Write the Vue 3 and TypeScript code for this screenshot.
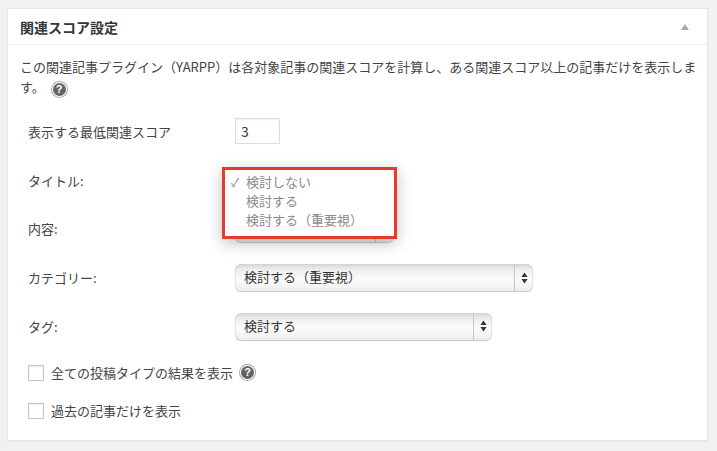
<script setup lang="ts">
interface SelectRow {
  label: string;
  value: string;
  width: number;
}

// the first two selects sit under the open menu, so their values can't be seen
const selectRows: SelectRow[] = [
  { label: 'タイトル:', value: '', width: 159 },
  { label: '内容:', value: '', width: 159 },
  { label: 'カテゴリー:', value: '検討する（重要視）', width: 298 },
  { label: 'タグ:', value: '検討する', width: 257 },
];

const menuItems = ['検討しない', '検討する', '検討する（重要視）'];
</script>

<template>
  <div class="page">
    <section class="card">
      <header class="card-head">
        <h2>関連スコア設定</h2>
        <span class="collapse"></span>
      </header>
      <div class="card-body">
        <p class="intro">
          この関連記事プラグイン（YARPP）は各対象記事の関連スコアを計算し、ある関連スコア以上の記事だけを表示します。
          <span class="help intro-help">?</span>
        </p>

        <div class="form">
          <div class="row">
            <label>表示する最低関連スコア</label>
            <div class="score">3</div>
          </div>
          <div v-for="row in selectRows" :key="row.label" class="row">
            <label>{{ row.label }}</label>
            <div class="select" :style="{ width: row.width + 'px' }">
              <span class="select-value">{{ row.value }}</span>
              <span class="select-arrows">
                <svg width="7" height="12" viewBox="0 0 7 12">
                  <path d="M3.5 0.5 L6.6 5 L0.4 5 Z M3.5 11.5 L0.4 7 L6.6 7 Z" fill="#333" />
                </svg>
              </span>
            </div>
          </div>
        </div>

        <div class="check-row first">
          <span class="checkbox"></span>
          <span>全ての投稿タイプの結果を表示</span>
          <span class="help">?</span>
        </div>
        <div class="check-row">
          <span class="checkbox"></span>
          <span>過去の記事だけを表示</span>
        </div>
      </div>

      <div class="menu">
        <div v-for="(item, i) in menuItems" :key="item" class="menu-item">
          <span class="tick">{{ i === 0 ? '✓' : '' }}</span>{{ item }}
        </div>
      </div>
    </section>
  </div>
</template>

<style>
html,
body {
  margin: 0;
  background: #f1f1f1;
}
</style>

<style scoped>
.page {
  width: 717px;
  height: 451px;
  padding: 8px 9px 10px 7px;
  box-sizing: border-box;
  overflow: hidden;
  background: #f1f1f1;
  font-family: "Noto Sans CJK JP", "Noto Sans", sans-serif;
  color: #444;
  font-size: 13px;
}

.card {
  position: relative;
  height: 433px;
  box-sizing: border-box;
  background: #fff;
  border: 1px solid #e5e5e5;
  box-shadow: 0 1px 1px rgba(0, 0, 0, 0.04);
}

.card-head {
  display: flex;
  align-items: center;
  justify-content: space-between;
  height: 36px;
  box-sizing: border-box;
  padding: 0 18px 0 12px;
  border-bottom: 1px solid #eee;
}

.card-head h2 {
  margin: 0;
  font-size: 14px;
  font-weight: 700;
  color: #32373c;
  line-height: 20px;
}

.collapse {
  width: 0;
  height: 0;
  border-left: 4px solid transparent;
  border-right: 4px solid transparent;
  border-bottom: 6px solid #a8a8a8;
}

.card-body {
  padding: 12px 8px 0 12px;
}

.intro {
  margin: 0;
  line-height: 20px;
}

.help {
  display: inline-flex;
  align-items: center;
  justify-content: center;
  width: 13px;
  height: 13px;
  border-radius: 50%;
  background: #636363;
  box-shadow: 0 0 0 1px #fff, 0 0 0 2px #aaa;
  color: #fff;
  font-family: "Liberation Sans", sans-serif;
  font-size: 11px;
  font-weight: 700;
  line-height: 13px;
  vertical-align: -1px;
}

.intro-help {
  margin-left: 5px;
}

.form {
  margin-top: 10px;
  padding-left: 8px;
}

.row {
  display: flex;
  align-items: center;
  height: 48.75px;
}

.row label {
  width: 207px;
  flex: none;
}

.score {
  width: 38px;
  height: 24px;
  padding-left: 5px;
  border: 1px solid #ddd;
  box-shadow: inset 0 1px 2px rgba(0, 0, 0, 0.07);
  color: #32373c;
  font-size: 14px;
  line-height: 24px;
  box-sizing: content-box;
}

.select {
  display: flex;
  height: 27px;
  box-sizing: border-box;
  border-radius: 6px;
  background: linear-gradient(#d6d6d6 0%, #eeeeee 22%, #fbfbfb 55%, #efefef 100%);
  box-shadow: 0 1px 1px rgba(0, 0, 0, 0.22), inset 1px 0 1px rgba(0, 0, 0, 0.08), inset -1px 0 1px rgba(0, 0, 0, 0.08);
  color: #333;
}

.select-value {
  flex: 1;
  padding-left: 9px;
  line-height: 25px;
}

.select-arrows {
  display: flex;
  align-items: center;
  justify-content: center;
  width: 18px;
  border-left: 1px solid #c8c8c8;
}

.check-row {
  display: flex;
  align-items: center;
  gap: 7px;
  height: 20px;
  margin: 18px 0 0 8px;
  line-height: 20px;
}

.check-row.first {
  margin-top: 12px;
}

.checkbox {
  width: 14px;
  height: 14px;
  flex: none;
  border: 1px solid #c4c4c4;
  box-shadow: inset 0 1px 2px rgba(0, 0, 0, 0.08);
}

.check-row .help {
  margin-left: 1px;
}

.menu {
  position: absolute;
  left: 214px;
  top: 158px;
  width: 175px;
  height: 72px;
  padding-top: 2px;
  box-sizing: border-box;
  border: 3px solid #e8392e;
  background: #fff;
  box-shadow: 0 4px 14px rgba(0, 0, 0, 0.26);
  color: #8a8a8a;
}

.menu-item {
  display: flex;
  height: 19px;
  line-height: 19px;
  white-space: nowrap;
}

.tick {
  width: 21px;
  padding-left: 6px;
  box-sizing: border-box;
  font-size: 12px;
}
</style>
